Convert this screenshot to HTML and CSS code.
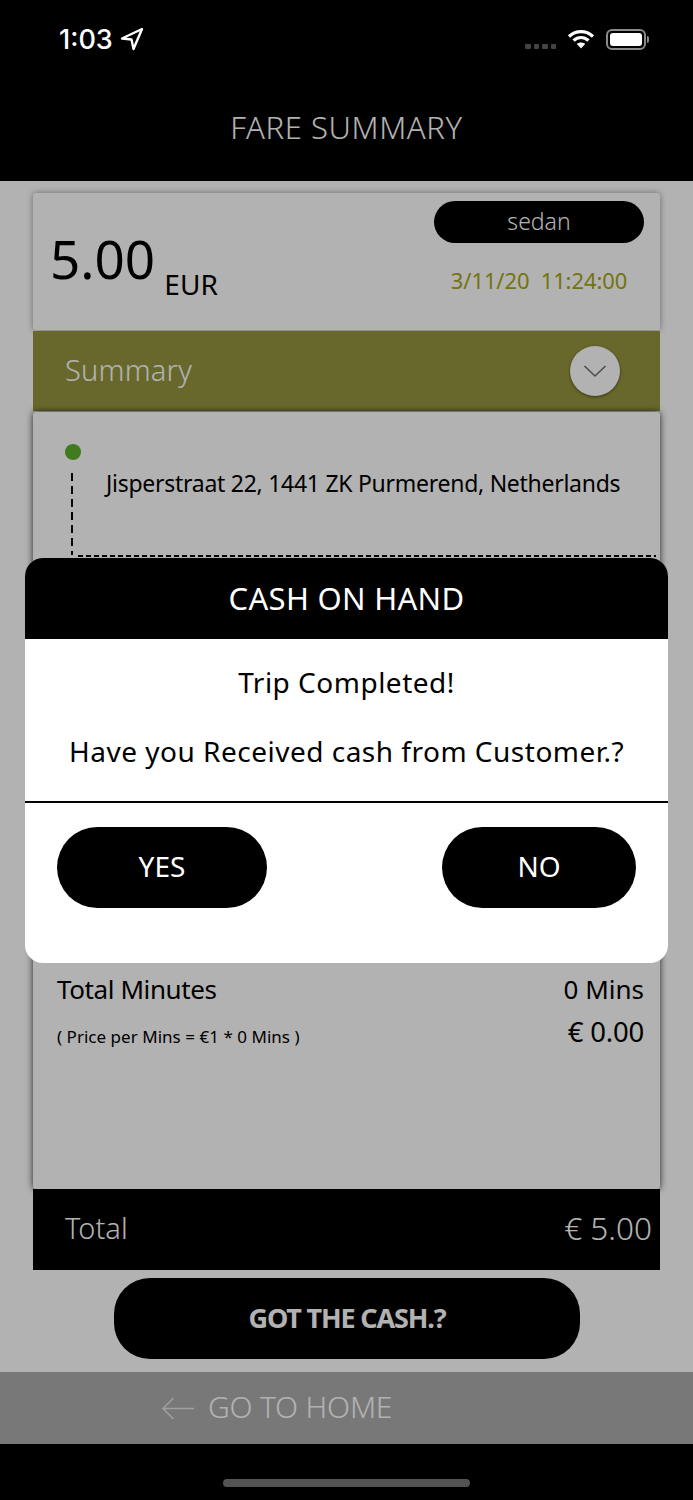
FILE: index.html
```html
<!DOCTYPE html>
<html lang="en">
<head>
  <meta charset="UTF-8" />
  <meta name="viewport" content="width=device-width, initial-scale=1.0" />
  <title>Fare Summary</title>
  <link rel="stylesheet" href="styles.css">
</head>
<body>
  <div class="page">
    <!-- Header -->
    <header class="top-bar">
      <h1>FARE SUMMARY</h1>
    </header>

    <!-- Fare card -->
    <main class="content">
      <section class="fare-card">
        <div class="fare-amount">
          <span class="amount">5.00</span>
          <span class="currency">EUR</span>
        </div>
        <div class="fare-meta">
          <span class="car-type">sedan</span>
          <span class="fare-date">3/11/20&nbsp;&nbsp;11:24:00</span>
        </div>
      </section>

      <section class="summary-bar">
        <span class="summary-label">Summary</span>
        <span class="summary-toggle">
          <svg width="24" height="14" viewBox="0 0 24 14"><path d="M1.5 2 L12 12 L22.5 2" fill="none" stroke="#6f6f6f" stroke-width="1.6"/></svg>
        </span>
      </section>

      <section class="details">
        <div class="route">
          <div class="route-line">
            <span class="route-dot"></span>
            <span class="route-dash"></span>
          </div>
          <p class="route-address">Jisperstraat 22, 1441 ZK Purmerend, Netherlands</p>
        </div>
        <div class="route-divider"></div>
        <div class="detail-rows">
          <div class="detail-row">
            <span>Total Minutes</span>
            <span class="detail-mins">0 Mins</span>
          </div>
          <div class="detail-row">
            <span class="detail-note">( Price per Mins = €1 * 0 Mins )</span>
            <span class="detail-price">€ 0.00</span>
          </div>
        </div>
      </section>

      <section class="total-bar">
        <span>Total</span>
        <span class="total-value">€ 5.00</span>
      </section>

      <button class="cash-button" type="button">GOT THE CASH.?</button>
    </main>

    <!-- Footer -->
    <div class="home-bar">
      <svg class="home-arrow" width="34" height="26" viewBox="0 0 34 26"><path d="M33 12.5 H2 M12.5 2 L2 12.5 L12.5 23" fill="none" stroke="#e6e6e6" stroke-width="1.5"/></svg>
      <span>GO TO HOME</span>
    </div>
    <div class="bottom-safe"></div>
  </div>

  <div class="scrim"></div>

  <!-- Status bar -->
  <div class="status-bar">
    <div class="status-left">
      <span class="clock">1:03</span>
      <svg width="24" height="24" viewBox="0 0 24 24"><path d="M22 2 L2 11.5 L11.5 12.5 L13.5 22 Z" fill="none" stroke="#fff" stroke-width="2.4" stroke-linejoin="round"/></svg>
    </div>
    <div class="status-right">
      <span class="signal"><i></i><i></i><i></i><i></i></span>
      <svg width="28" height="20" viewBox="0 0 28 20">
        <path d="M2 7.5 C9 1 19 1 26 7.5" fill="none" stroke="#fff" stroke-width="3.2"/>
        <path d="M6.5 11.5 C11 7.5 17 7.5 21.5 11.5" fill="none" stroke="#fff" stroke-width="3.2"/>
        <path d="M14 19.5 L9.8 15 C12 13 16 13 18.2 15 Z" fill="#fff"/>
      </svg>
      <span class="battery"><span class="battery-fill"></span></span>
      <span class="battery-tip"></span>
    </div>
  </div>

  <!-- Cash dialog -->
  <div class="dialog">
    <div class="dialog-title">CASH ON HAND</div>
    <div class="dialog-body">
      <p>Trip Completed!</p>
      <p>Have you Received cash from Customer.?</p>
    </div>
    <div class="dialog-actions">
      <button class="dialog-button yes" type="button">YES</button>
      <button class="dialog-button no" type="button">NO</button>
    </div>
  </div>
</body>
</html>
```

FILE: styles.css
```css
* {
  box-sizing: border-box;
}
body {
  font-family: 'Noto Sans', sans-serif;
  margin: 0;
  width: 693px;
  height: 1500px;
  overflow: hidden;
  position: relative;
  background: #fff;
  color: #000;
}
.page {
  height: 1500px;
  display: flex;
  flex-direction: column;
}
.top-bar {
  height: 181px;
  flex: none;
  background: #000;
  color: #fff;
  display: flex;
  justify-content: center;
  padding-top: 106px;
}
.top-bar h1 {
  margin: 0;
  font-size: 31px;
  line-height: 42px;
  font-weight: 300;
  letter-spacing: 0.6px;
}
.content {
  flex: 1;
  padding: 12px 33px 0;
  display: flex;
  flex-direction: column;
}
.fare-card {
  height: 137px;
  flex: none;
  display: flex;
  justify-content: space-between;
  box-shadow: 0 0 6px rgba(0, 0, 0, 0.4);
  border-radius: 3px;
  padding: 8px 16px 0 17px;
}
.fare-amount {
  display: flex;
  align-items: flex-end;
  gap: 9px;
  height: 100px;
}
.amount {
  font-size: 53px;
  line-height: 72px;
  margin-bottom: 6px;
}
.currency {
  font-size: 28px;
  line-height: 34px;
  letter-spacing: 0.2px;
}
.fare-meta {
  display: flex;
  flex-direction: column;
  align-items: center;
  gap: 20px;
}
.car-type {
  width: 210px;
  height: 42px;
  border-radius: 21px;
  background: #000;
  color: #fff;
  font-size: 23px;
  font-weight: 300;
  text-align: center;
  line-height: 40px;
}
.fare-date {
  font-size: 22px;
  line-height: 34px;
  color: #a6a612;
  letter-spacing: -0.1px;
}
.summary-bar {
  height: 80px;
  flex: none;
  margin-top: 1px;
  background: #96963f;
  color: #fff;
  display: flex;
  align-items: center;
  justify-content: space-between;
  padding: 0 40px 0 32px;
  font-size: 29px;
  line-height: 36px;
  font-weight: 300;
}
.summary-label {
  margin-top: -3px;
  letter-spacing: 0.2px;
}
.summary-toggle {
  width: 50px;
  height: 50px;
  border-radius: 50%;
  background: #fff;
  box-shadow: 0 1px 3px rgba(0, 0, 0, 0.5);
  display: flex;
  align-items: center;
  justify-content: center;
}
.details {
  height: 777px;
  flex: none;
  margin-top: 1px;
  box-shadow: 0 0 7px rgba(0, 0, 0, 0.8);
  border-radius: 3px;
  display: flex;
  flex-direction: column;
}
.route {
  height: 143px;
  flex: none;
  display: flex;
  padding: 32px 0 0 32px;
}
.route-line {
  width: 41px;
  flex: none;
  display: flex;
  flex-direction: column;
  align-items: flex-start;
}
.route-dot {
  width: 16px;
  height: 16px;
  border-radius: 50%;
  background: #5cb02c;
}
.route-dash {
  width: 2px;
  height: 84px;
  margin-top: 13px;
  margin-left: 6px;
  background: repeating-linear-gradient(to bottom, #000 0 8px, transparent 8px 13px);
}
.route-address {
  margin: 23px 0 0;
  font-size: 23px;
  line-height: 32px;
  letter-spacing: -0.27px;
}
.route-divider {
  margin: 0 4px 0 45px;
  height: 2px;
  background: repeating-linear-gradient(to right, #000 0 5px, transparent 5px 8px);
}
.detail-rows {
  margin-top: 411px;
  padding: 0 16px 0 24px;
}
.detail-row {
  display: flex;
  justify-content: space-between;
  align-items: center;
  font-size: 26px;
  height: 42px;
  letter-spacing: -0.4px;
}
.detail-mins {
  letter-spacing: 0;
}
.detail-note {
  font-size: 17px;
  letter-spacing: 0.03px;
  margin-top: 10px;
}
.detail-price {
  font-size: 27.5px;
  letter-spacing: -0.2px;
}
.total-bar {
  height: 81px;
  flex: none;
  background: #000;
  color: #fff;
  display: flex;
  align-items: center;
  justify-content: space-between;
  padding: 0 8px 4px 32px;
  font-size: 29px;
  font-weight: 300;
}
.total-value {
  font-size: 31.5px;
}
.cash-button {
  width: 466px;
  height: 81px;
  flex: none;
  margin: 8px 0 0 81px;
  border: none;
  border-radius: 36px;
  background: #000;
  color: #fff;
  font-family: inherit;
  font-size: 27px;
  font-weight: 700;
  letter-spacing: -1.15px;
  padding-bottom: 3px;
}
.home-bar {
  height: 72px;
  flex: none;
  background: #acacac;
  color: #fff;
  display: flex;
  align-items: center;
  gap: 13px;
  padding: 0 0 3px 161px;
  font-size: 30px;
  font-weight: 300;
  letter-spacing: -0.2px;
}
.home-arrow {
  margin-top: 4px;
}
.bottom-safe {
  height: 56px;
  flex: none;
  background: #000;
  display: flex;
  justify-content: center;
  align-items: flex-end;
  padding-bottom: 13px;
}
.bottom-safe::after {
  content: "";
  width: 247px;
  height: 8px;
  border-radius: 4px;
  background: #787878;
}
.scrim {
  position: absolute;
  inset: 0;
  background: rgba(0, 0, 0, 0.3);
}
.status-bar {
  position: absolute;
  top: 20px;
  left: 0;
  right: 0;
  height: 38px;
  display: flex;
  justify-content: space-between;
  align-items: center;
  padding: 0 44px 0 59px;
  color: #fff;
}
.status-left {
  display: flex;
  align-items: center;
  gap: 7px;
}
.clock {
  font-family: 'Inter', sans-serif;
  font-size: 27px;
  font-weight: 500;
}
.status-right {
  display: flex;
  align-items: center;
}
.signal {
  display: flex;
  gap: 3px;
  margin-top: 15px;
  margin-right: 11px;
}
.signal i {
  width: 5.5px;
  height: 5px;
  border-radius: 1px;
  background: #444;
}
.battery {
  width: 40px;
  height: 21px;
  margin-left: 11px;
  border: 2px solid #8a8a8a;
  border-radius: 6px;
  padding: 2px;
  display: flex;
}
.battery-fill {
  flex: 1;
  background: #fff;
  border-radius: 3px;
}
.battery-tip {
  width: 2px;
  height: 7px;
  margin-left: 1px;
  background: #8a8a8a;
  border-radius: 0 2px 2px 0;
}
.dialog {
  position: absolute;
  top: 558px;
  left: 25px;
  width: 643px;
  height: 405px;
  background: #fff;
  border-radius: 18px;
  overflow: hidden;
}
.dialog-title {
  height: 81px;
  background: #000;
  color: #fff;
  text-align: center;
  font-size: 31px;
  line-height: 80px;
  letter-spacing: 0.3px;
}
.dialog-body {
  height: 164px;
  border-bottom: 2px solid #000;
  text-align: center;
  font-size: 28px;
  line-height: 38px;
  letter-spacing: 0.5px;
  padding-top: 24px;
}
.dialog-body p {
  margin: 0 0 31px;
}
.dialog-actions {
  display: flex;
  justify-content: space-between;
  padding: 24px 32px 0;
}
.dialog-button {
  height: 81px;
  border: none;
  border-radius: 41px;
  background: #000;
  color: #fff;
  font-family: inherit;
  font-size: 28px;
  padding-bottom: 4px;
}
.yes {
  width: 210px;
}
.no {
  width: 194px;
}
```
